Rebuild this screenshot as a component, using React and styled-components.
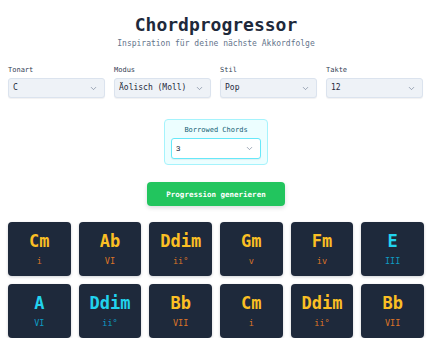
import React, { useState } from 'react'
import styled, { createGlobalStyle } from 'styled-components'
import { ChevronDown } from 'lucide-react'

const GlobalStyle = createGlobalStyle`
  body{
    margin:0;
    background:#ffffff;
    font-family:"DejaVu Sans Mono", "Liberation Mono", monospace;
  }
`;

const chords = [
  { name: 'Cm', roman: 'i', borrowed: false },
  { name: 'Ab', roman: 'VI', borrowed: false },
  { name: 'Ddim', roman: 'ii°', borrowed: false },
  { name: 'Gm', roman: 'v', borrowed: false },
  { name: 'Fm', roman: 'iv', borrowed: false },
  { name: 'E', roman: 'III', borrowed: true },
  { name: 'A', roman: 'VI', borrowed: true },
  { name: 'Ddim', roman: 'ii°', borrowed: true },
  { name: 'Bb', roman: 'VII', borrowed: false },
  { name: 'Cm', roman: 'i', borrowed: false },
  { name: 'Ddim', roman: 'ii°', borrowed: false },
  { name: 'Bb', roman: 'VII', borrowed: false },
];

const fields = [
  { label: 'Tonart', options: ['C', 'D', 'E', 'F', 'G', 'A', 'B'] },
  { label: 'Modus', options: ['Äolisch (Moll)', 'Ionisch (Dur)', 'Dorisch'] },
  { label: 'Stil', options: ['Pop', 'Jazz', 'Rock'] },
  { label: 'Takte', options: ['12', '4', '8', '16'] },
];

function App() {
  const [values, setValues] = useState(fields.map((f) => f.options[0]));
  const [borrowed, setBorrowed] = useState('3');

  return (
    <Container>
      <GlobalStyle />
      <Title>Chordprogressor</Title>
      <Subtitle>Inspiration für deine nächste Akkordfolge</Subtitle>

      <Controls>
        {fields.map((f, i) => (
          <Field key={f.label}>
            <Label>{f.label}</Label>
            <SelectBox>
              <Select
                value={values[i]}
                onChange={(e) => {
                  const next = [...values];
                  next[i] = e.target.value;
                  setValues(next);
                }}
              >
                {f.options.map((o) => (
                  <option key={o}>{o}</option>
                ))}
              </Select>
              <ChevronDown size={9} strokeWidth={1.6} color="#64748b" />
            </SelectBox>
          </Field>
        ))}
      </Controls>

      <BorrowedBox>
        <BorrowedLabel>Borrowed Chords</BorrowedLabel>
        <SelectBox $cyan>
          <Select $sans value={borrowed} onChange={(e) => setBorrowed(e.target.value)}>
            {['0', '1', '2', '3', '4'].map((o) => (
              <option key={o}>{o}</option>
            ))}
          </Select>
          <ChevronDown size={9} strokeWidth={1.6} color="#64748b" />
        </SelectBox>
      </BorrowedBox>

      <GenerateButton>Progression generieren</GenerateButton>

      <Grid>
        {chords.map((c, i) => (
          <Card key={i}>
            <ChordName $borrowed={c.borrowed}>{c.name}</ChordName>
            <Roman $borrowed={c.borrowed}>{c.roman}</Roman>
          </Card>
        ))}
      </Grid>
    </Container>
  )
}

const Container = styled.div`
  display:flex;
  flex-direction:column;
  align-items:center;
  padding:14px 8px 0 8px;
`;

const Title = styled.h1`
  margin:0;
  font-size:18px;
  line-height:22px;
  font-weight:700;
  color:#1e293b;
  letter-spacing:0;
`;

const Subtitle = styled.p`
  margin:3px 0 0 0;
  font-size:8px;
  line-height:10px;
  color:#64748b;
`;

const Controls = styled.div`
  width:100%;
  margin-top:17px;
  display:grid;
  grid-template-columns:repeat(4, 97px);
  column-gap:9px;
`;

const Field = styled.div`
  display:flex;
  flex-direction:column;
  gap:3px;
`;

const Label = styled.label`
  font-size:7px;
  line-height:9px;
  color:#334155;
`;

const SelectBox = styled.div`
  display:flex;
  align-items:center;
  height:${(p) => (p.$cyan ? '21px' : '20px')};
  box-sizing:border-box;
  padding:0 6px 0 4px;
  border:1px solid ${(p) => (p.$cyan ? '#67e8f9' : '#dbe3ee')};
  border-radius:3px;
  background:${(p) => (p.$cyan ? '#ffffff' : '#eef2f7')};
  box-shadow:0 1px 1px rgba(15,23,42,0.06);
`;

const Select = styled.select`
  flex:1;
  min-width:0;
  height:100%;
  appearance:none;
  -webkit-appearance:none;
  border:none;
  outline:none;
  background:transparent;
  padding:0;
  line-height:16px;
  font-family:${(p) => (p.$sans ? '"Roboto", "Liberation Sans", sans-serif' : '"DejaVu Sans Mono", monospace')};
  font-size:8px;
  color:#1e293b;
`;

const BorrowedBox = styled.div`
  margin-top:21px;
  width:104px;
  box-sizing:border-box;
  padding:6px 6px 5px 6px;
  display:flex;
  flex-direction:column;
  align-items:stretch;
  gap:3px;
  background:#ecfeff;
  border:1px solid #a5f3fc;
  border-radius:4px;
`;

const BorrowedLabel = styled.span`
  text-align:center;
  font-size:7px;
  line-height:9px;
  color:#155e75;
`;

const GenerateButton = styled.button`
  margin-top:17px;
  width:138px;
  height:24px;
  border:none;
  border-radius:4px;
  background:#22c55e;
  color:#ffffff;
  font-family:"DejaVu Sans Mono", monospace;
  font-weight:700;
  font-size:7.5px;
  box-shadow:0 2px 4px rgba(15,23,42,0.15);
  cursor:pointer;
`;

const Grid = styled.div`
  margin-top:16px;
  width:100%;
  display:grid;
  grid-template-columns:repeat(6, 1fr);
  gap:8px;
`;

const Card = styled.div`
  height:54px;
  background:#1e293b;
  border-radius:4px;
  display:flex;
  flex-direction:column;
  align-items:center;
  justify-content:center;
  gap:5px;
  box-shadow:0 1px 3px rgba(15,23,42,0.2);
`;

const ChordName = styled.span`
  font-size:17px;
  line-height:19px;
  font-weight:700;
  color:${(p) => (p.$borrowed ? '#22d3ee' : '#fbbf24')};
`;

const Roman = styled.span`
  font-size:8.5px;
  line-height:10px;
  color:${(p) => (p.$borrowed ? '#0e9bc4' : '#dd7427')};
`;

export default App
